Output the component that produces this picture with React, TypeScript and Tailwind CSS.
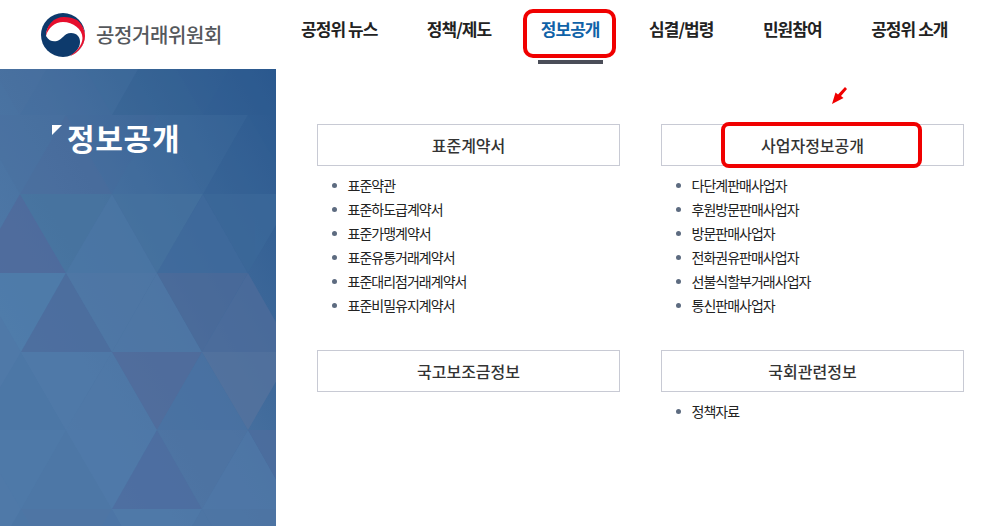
import React from 'react';

const font = { kr: 'font-["Noto_Sans_CJK_KR","Noto_Sans",sans-serif]' };

// vertices of the background pattern sit on a 91 x 79 triangle grid
const topTriangles: [string, string][] = [
  ['-25,36 66,36 20,115', '#4a6f9f'],
  ['66,36 157,36 112,115', '#3f6e9c'],
  ['157,36 248,36 203,115', '#2f5d90'],
  ['248,36 339,36 294,115', '#2b5a8f'],
  ['20,115 112,115 66,36', '#446c9d'],
  ['112,115 203,115 157,36', '#30608f'],
  ['203,115 294,115 248,36', '#2d5b90'],
  ['-25,115 66,115 20,194', '#4a6f9f'],
  ['66,115 157,115 112,194', '#446a9c'],
  ['157,115 248,115 203,194', '#3f6e9d'],
  ['248,115 339,115 294,194', '#2f5e92'],
  ['20,194 112,194 66,115', '#4d6698'],
  ['112,194 203,194 157,115', '#416f9f'],
  ['203,194 294,194 248,115', '#336194'],
];

const triangles: [string, string][] = [
  ['-25,273 66,273 20,194', '#50699b'],
  ['20,194 112,194 66,273', '#47749f'],
  ['66,273 157,273 112,194', '#4b77a5'],
  ['112,194 203,194 157,273', '#45729f'],
  ['157,273 248,273 203,194', '#3f6a9c'],
  ['203,194 294,194 248,273', '#3b6899'],
  ['-25,273 66,273 21,352', '#4f7dab'],
  ['21,352 112,352 66,273', '#4d6c9d'],
  ['66,273 157,273 112,352', '#5078a6'],
  ['112,352 202,352 157,273', '#5078a6'],
  ['157,273 248,273 202,352', '#4c6a99'],
  ['202,352 293,352 248,273', '#4e6c9b'],
  ['-25,430 66,430 21,352', '#4c77a6'],
  ['21,352 112,352 66,430', '#507aa9'],
  ['66,430 157,430 112,352', '#5079a8'],
  ['112,352 202,352 157,430', '#526b9b'],
  ['157,430 248,430 202,352', '#4a72a3'],
  ['202,352 293,352 248,430', '#56739e'],
  ['21,509 112,509 66,430', '#4d77a6'],
  ['-25,430 66,430 21,509', '#4e79a8'],
  ['66,430 157,430 112,509', '#507aaa'],
  ['112,509 202,509 157,430', '#4e6ca0'],
  ['157,430 248,430 202,509', '#4f74a3'],
  ['202,509 293,509 248,430', '#5078a8'],
  ['248,430 339,430 293,509', '#4e6d9e'],
  ['-25,588 66,588 21,509', '#4c76a5'],
  ['21,509 112,509 66,588', '#4e74a3'],
  ['66,588 157,588 112,509', '#4b74a6'],
  ['112,509 202,509 157,588', '#507aa9'],
  ['157,588 248,588 202,509', '#4e76a5'],
  ['202,509 293,509 248,588', '#4f76a5'],
];

const TriangleBg = () => (
  <svg className="absolute inset-0" width="276" height="457" viewBox="0 69 276 457">
    <defs>
      <linearGradient id="sideBase" x1="1" y1="0" x2="0.2" y2="0.75">
        <stop offset="0" stopColor="#2a588e" />
        <stop offset="0.6" stopColor="#47709f" />
        <stop offset="1" stopColor="#4f79a8" />
      </linearGradient>
    </defs>
    <rect x="0" y="69" width="276" height="457" fill="url(#sideBase)" />
    <g opacity="0.3">
      {topTriangles.map(([points, fill]) => (
        <polygon key={points} points={points} fill={fill} />
      ))}
    </g>
    <g opacity="0.75">
      {triangles.map(([points, fill]) => (
        <polygon key={points} points={points} fill={fill} />
      ))}
    </g>
  </svg>
);

const Logo = () => (
  <svg width="46" height="46" viewBox="0 0 46 46">
    <circle cx="23" cy="23" r="22" fill="#0d3a6c" />
    <path d="M6 24 C6 14 14 6 24 6 C35 6 45.5 14 45 24 C45 33 38 41 30 44 L28 44.5 C35 42 40 36 40 30 C40 25 37 21 31 21 C24 21 22 28 17 29 C13 30 9 29 6 24 Z" fill="#ffffff" />
    <path d="M6 24 C6 13 14 5 24 5 C29 5 33 6 37 8 C41 11 45 17 45 24 C45 33 38 41 30 44 C36 40 42.5 33 42.5 26 C42.5 17 33 10 23 10 C15 10 8 16 6 24 Z" fill="#e60f2d" />
  </svg>
);

const Card = ({ title, items }: { title: string; items?: string[] }) => (
  <div>
    <div className="flex h-[42px] items-center justify-center border border-[#c8cad4] bg-white text-[16px] font-medium text-[#333]">
      {title}
    </div>
    {items && (
      <ul className="mt-[7px] flex list-none flex-col pl-[15px]">
        {items.map((item) => (
          <li key={item} className="flex h-6 items-center gap-[10.6px] text-[14px] tracking-[-1px] text-[#222]">
            <span className="h-[5px] w-[5px] rounded-full bg-[#5d6b80]" />
            {item}
          </li>
        ))}
      </ul>
    )}
  </div>
);

const navItems = ['공정위 뉴스', '정책/제도', '정보공개', '심결/법령', '민원참여', '공정위 소개'];

export default function App() {
  return (
    <div className={`relative h-[526px] w-[999px] overflow-hidden bg-white ${font.kr}`}>
      <header className="flex h-[69px] items-center">
        <div className="ml-[40px] flex w-[261px] items-center gap-[10px]">
          <Logo />
          <span className="text-[20px] font-medium tracking-[-0.4px] text-[#55585c]">공정거래위원회</span>
        </div>
        <nav className="flex gap-[49.5px] pb-3 text-[17px] font-bold tracking-[-0.95px] text-[#222]">
          {navItems.map((item) => (
            <a key={item} className={item === '정보공개' ? 'text-[#0f62a8]' : ''}>
              {item}
            </a>
          ))}
        </nav>
      </header>

      <div className="flex h-[457px]">
        <aside className="relative w-[276px] shrink-0">
          <TriangleBg />
          <h1 className="relative ml-[67px] mt-[46px] text-[30px] font-bold leading-[44px] tracking-[0.7px] text-white">
            <span className="absolute -left-[15px] top-[10px] h-0 w-0 border-b-[10px] border-l-[10px] border-b-transparent border-l-white" />
            정보공개
          </h1>
        </aside>

        <main className="grid flex-1 grid-cols-[303px_303px] content-start gap-x-[41px] pl-[41px] pt-[55px]">
          <div className="h-[226px]">
            <Card title="표준계약서" items={['표준약관', '표준하도급계약서', '표준가맹계약서', '표준유통거래계약서', '표준대리점거래계약서', '표준비밀유지계약서']} />
          </div>
          <div className="h-[226px]">
            <Card title="사업자정보공개" items={['다단계판매사업자', '후원방문판매사업자', '방문판매사업자', '전화권유판매사업자', '선불식할부거래사업자', '통신판매사업자']} />
          </div>
          <Card title="국고보조금정보" />
          <Card title="국회관련정보" items={['정책자료']} />
        </main>
      </div>

      {/* red annotations drawn over the capture */}
      <div className="absolute left-[523px] top-[9px] h-[49px] w-[93px] rounded-[10px] border-[4px] border-[#f00000]" />
      <div className="absolute left-[721px] top-[122px] h-[46px] w-[201px] rounded-[8px] border-[4px] border-[#f00000]" />
      <div className="absolute left-[538px] top-[60px] h-1 w-[65px] bg-[#4a4d58]" />
      <svg className="absolute left-[830px] top-[85px]" width="18" height="21" viewBox="0 0 18 21">
        <path d="M15 2 L17 4 L11 11 L13.5 13 L2 19 L5.5 7.5 L8 9.5 Z" fill="#f00000" />
      </svg>
    </div>
  );
}
